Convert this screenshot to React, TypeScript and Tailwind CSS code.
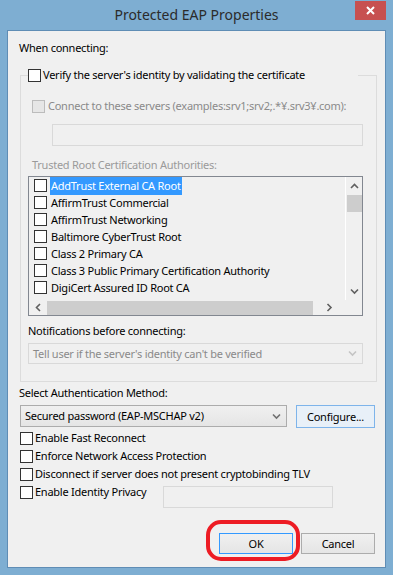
import React from "react";

const certs = [
  "AddTrust External CA Root",
  "AffirmTrust Commercial",
  "AffirmTrust Networking",
  "Baltimore CyberTrust Root",
  "Class 2 Primary CA",
  "Class 3 Public Primary Certification Authority",
  "DigiCert Assured ID Root CA",
];

const options = [
  "Enable Fast Reconnect",
  "Enforce Network Access Protection",
  "Disconnect if server does not present cryptobinding TLV",
];

// plain win8 style checkbox
const Box = ({ disabled }: { disabled?: boolean }) => (
  <span
    className={
      disabled
        ? "block w-[13px] h-[13px] shrink-0 border border-[#bcbcbc] bg-[#e6e6e6]"
        : "block w-[13px] h-[13px] shrink-0 border border-[#333333] bg-white"
    }
  />
);

const Chevron = ({ dir, color }: { dir: "up" | "down" | "left" | "right"; color: string }) => {
  const d = {
    up: "M1 5 L4.5 1.5 L8 5",
    down: "M1 1.5 L4.5 5 L8 1.5",
    left: "M5 1 L1.5 4.5 L5 8",
    right: "M1.5 1 L5 4.5 L1.5 8",
  }[dir];
  const vertical = dir === "up" || dir === "down";
  return (
    <svg width={vertical ? 9 : 7} height={vertical ? 7 : 9} viewBox={vertical ? "0 0 9 7" : "0 0 7 9"}>
      <path d={d} fill="none" stroke={color} strokeWidth="1.6" />
    </svg>
  );
};

export default function App() {
  return (
    <div className="relative w-[393px] h-[575px] overflow-hidden bg-[#7eaed2] font-['Noto_Sans',sans-serif] text-[11px] tracking-[-0.25px] leading-[16px] text-black whitespace-nowrap">
      {/* title bar */}
      <div className="grid grid-cols-[1fr_auto_1fr] h-[30px]">
        <div />
        <div className="text-[14px] tracking-normal leading-[30px] text-[#2b2b2b]">Protected EAP Properties</div>
        <div className="flex justify-end items-start pr-[7px] pt-[1px]">
          <div className="w-[31px] h-[19px] bg-[#c75050] flex items-center justify-center">
            <svg width="9" height="9" viewBox="0 0 9 9">
              <path d="M1 1 L8 8 M8 1 L1 8" stroke="#fff" strokeWidth="2" />
            </svg>
          </div>
        </div>
      </div>

      {/* client area */}
      <div className="ml-[7px] w-[379px] h-[538px] border border-[#5f8db5] bg-[#f0f0f0]">
        <div className="mt-[9px] pl-[11px] h-[16px]">When connecting:</div>

        <fieldset className="mt-[11px] ml-[12px] w-[357px] border border-[#dcdcdc] pl-[7px] pr-[12px] pb-[17px]">
          <legend className="w-[330px] h-[16px]">
            <div className="flex items-center h-[16px] gap-[2px]">
              <Box />
              <span>Verify the server's identity by validating the certificate</span>
            </div>
          </legend>

          <div className="mt-[15px] ml-[4px] h-[16px] flex items-center gap-[3px] text-[#8a8a8a]">
            <Box disabled />
            <span>Connect to these servers (examples:srv1;srv2;.*¥.srv3¥.com):</span>
          </div>

          <div className="mt-[10px] ml-[24px] w-[311px] h-[22px] border border-[#d9d9d9] bg-[#f0f0f0]" />

          <div className="mt-[11px] ml-[4px] h-[16px] text-[#9a9a9a]">Trusted Root Certification Authorities:</div>

          {/* certificate list */}
          <div className="mt-[3px] w-[335px] h-[140px] border border-[#828790] bg-[#f0f0f0] grid grid-cols-[1fr_17px] grid-rows-[1fr_15px]">
            <div className="overflow-hidden">
              {certs.map((c, i) => (
                <div key={c} className="h-[17px] flex items-center pl-[5px]">
                  <Box />
                  <span
                    className={
                      i === 0
                        ? "ml-[3px] px-[1px] h-[18px] leading-[18px] bg-[#3399ff] text-white"
                        : "ml-[3px] px-[1px]"
                    }
                  >
                    {c}
                  </span>
                </div>
              ))}
            </div>
            <div className="border-l border-[#ffffff] flex flex-col items-center">
              <div className="h-[18px] flex items-center justify-center">
                <Chevron dir="up" color="#606060" />
              </div>
              <div className="w-[15px] h-[17px] bg-[#cdcdcd]" />
              <div className="flex-1" />
              <div className="h-[18px] flex items-center justify-center">
                <Chevron dir="down" color="#606060" />
              </div>
            </div>
            <div className="flex items-center">
              <div className="w-[18px] flex justify-center">
                <Chevron dir="left" color="#606060" />
              </div>
              <div className="w-[266px] h-[14px] bg-[#cdcdcd]" />
              <div className="flex-1 flex justify-center">
                <Chevron dir="right" color="#606060" />
              </div>
            </div>
            <div />
          </div>

          <div className="mt-[7px] h-[16px]">Notifications before connecting:</div>
          <div className="mt-[4px] w-[335px] h-[21px] border border-[#d9d9d9] bg-[#f0f0f0] flex items-center justify-between pl-[4px] pr-[5px] text-[#8a8a8a]">
            <span>Tell user if the server's identity can't be verified</span>
            <Chevron dir="down" color="#c4c4c4" />
          </div>
        </fieldset>

        <div className="mt-[3px] pl-[11px] h-[16px]">Select Authentication Method:</div>
        <div className="mt-[4px] ml-[12px] flex gap-[9px]">
          <div className="w-[267px] h-[22px] border border-[#acacac] bg-gradient-to-b from-[#f0f0f0] to-[#e5e5e5] flex items-center justify-between pl-[4px] pr-[5px]">
            <span>Secured password (EAP-MSCHAP v2)</span>
            <Chevron dir="down" color="#707070" />
          </div>
          <div className="w-[79px] h-[23px] border border-[#7eb4ea] bg-[#e8f0f8] flex items-center justify-center">
            Configure...
          </div>
        </div>

        <div className="mt-[1px] ml-[12px]">
          {options.map((o) => (
            <div key={o} className="h-[18px] flex items-center gap-[2px]">
              <Box />
              <span>{o}</span>
            </div>
          ))}
          <div className="h-[18px] flex items-start">
            <div className="w-[143px] h-[18px] flex items-center gap-[2px]">
              <Box />
              <span>Enable Identity Privacy</span>
            </div>
            <div className="mt-[3px] w-[170px] h-[22px] shrink-0 border border-[#d9d9d9] bg-[#f0f0f0]" />
          </div>
        </div>

        <div className="mt-[32px] pr-[10px] flex justify-end gap-[8px]">
          <div className="w-[74px] h-[21px] border border-[#3399ff] bg-gradient-to-b from-[#f0f0f0] to-[#e5e5e5] flex items-center justify-center">
            OK
          </div>
          <div className="w-[74px] h-[21px] border border-[#acacac] bg-gradient-to-b from-[#f0f0f0] to-[#e5e5e5] flex items-center justify-center">
            Cancel
          </div>
        </div>
      </div>

      {/* red highlight drawn over the OK button */}
      <div className="absolute left-[206px] top-[520px] w-[94px] h-[41px] border-[4px] border-[#ed1c24] rounded-[15px]" />
    </div>
  );
}
